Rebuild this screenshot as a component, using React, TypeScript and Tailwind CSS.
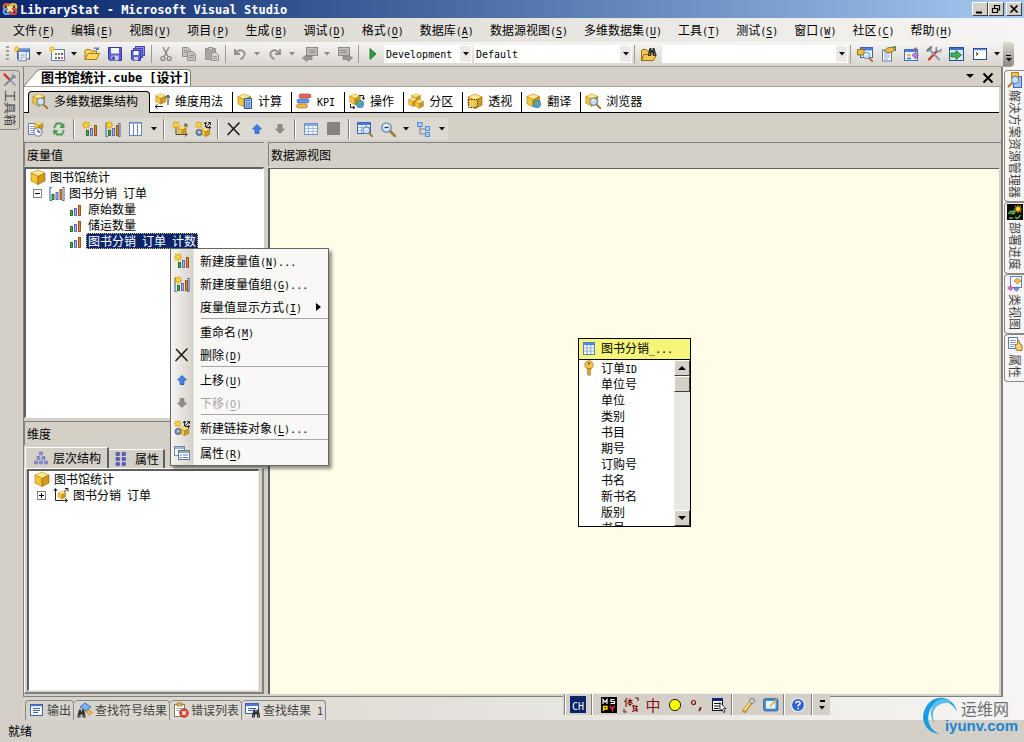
import React from 'react';

/* ---------- text ---------- */

const MONO = "font-['DejaVu_Sans_Mono','Liberation_Mono',monospace]";

function T({ children, big = false }: { children: string; big?: boolean }) {
  const parts = children.split(/([\x00-\x7f]+)/).filter(Boolean);
  return (
    <span className="whitespace-pre">
      {parts.map((p, i) =>
        p.charCodeAt(0) < 128 ? (
          <span key={i} className={`leading-none ${MONO} ${big ? 'text-[12px]' : 'text-[10px]'}`}>{p}</span>
        ) : (
          <React.Fragment key={i}>{p}</React.Fragment>
        ),
      )}
    </span>
  );
}

function KeyLabel({ text, k, dots = false }: { text: string; k: string; dots?: boolean }) {
  return (
    <span className="whitespace-pre">
      {text}
      <span className={`${MONO} text-[10px] leading-none`}>
        (<span className="underline underline-offset-2">{k}</span>){dots ? '...' : ''}
      </span>
    </span>
  );
}

/* ---------- drawing pieces ---------- */

function Cube({ t }: { t?: string }) {
  return (
    <g transform={t}>
      <path d="M8 1 L15 4 L8 7.5 L1 4Z" fill="#ffe98c" stroke="#b8860b" strokeWidth=".6" />
      <path d="M1 4 L8 7.5 V15.5 L1 12Z" fill="#f6c63a" stroke="#a87408" strokeWidth=".6" />
      <path d="M15 4 L8 7.5 V15.5 L15 12Z" fill="#d29a1c" stroke="#8a5f08" strokeWidth=".6" />
    </g>
  );
}

function Star({ t }: { t?: string }) {
  return (
    <g transform={t}>
      <path d="M4 0V8M0 4H8M1 1L7 7M7 1L1 7" stroke="#e6a200" strokeWidth="1.1" />
      <circle cx="4" cy="4" r="2" fill="#ffe24a" stroke="#e6a200" strokeWidth=".5" />
    </g>
  );
}

function Lens({ t }: { t?: string }) {
  return (
    <g transform={t}>
      <path d="M9 9L14 14" stroke="#a8742c" strokeWidth="2.4" strokeLinecap="round" />
      <circle cx="6" cy="6" r="4.3" fill="#cfe6ff" fillOpacity=".9" stroke="#6a86ac" strokeWidth="1.3" />
      <path d="M3.8 5.4Q4.6 3.6 6.6 3.6" stroke="#fff" strokeWidth="1" fill="none" />
    </g>
  );
}

function Bars({ t }: { t?: string }) {
  return (
    <g transform={t}>
      <rect x="2.5" y="9.5" width="2" height="5" fill="#43b349" stroke="#1d6a24" strokeWidth=".9" />
      <rect x="6.5" y="7.5" width="2" height="7" fill="#b0b4f2" stroke="#5a5cb0" strokeWidth=".9" />
      <rect x="10.5" y="4.5" width="2" height="10" fill="#e08a30" stroke="#8f4a10" strokeWidth=".9" />
    </g>
  );
}

function Win({ t }: { t?: string }) {
  return (
    <g transform={t}>
      <rect x=".5" y=".5" width="12" height="10" fill="#f6f9ff" stroke="#3d62a8" />
      <rect x="1" y="1" width="11" height="2.5" fill="#4f7fd8" />
    </g>
  );
}

function Sheet({ t, lines = '#7f9ccc' }: { t?: string; lines?: string }) {
  return (
    <g transform={t}>
      <rect x=".5" y=".5" width="9" height="11" fill="#fff" stroke="#5f7cae" />
      <path d="M2 3.5H8M2 5.5H8M2 7.5H8M2 9.5H6" stroke={lines} strokeWidth=".9" />
    </g>
  );
}

function Globe({ t }: { t?: string }) {
  return (
    <g transform={t}>
      <circle cx="4" cy="4" r="3.8" fill="#4b9bd8" stroke="#2a6397" strokeWidth=".5" />
      <path d="M1.5 2.5Q4 0 5 2T3.5 4.5 1.5 2.5M4.5 5Q7 4 6.5 6T4.5 5" fill="#5cb85c" />
    </g>
  );
}

function Brackets() {
  return <path d="M3 2.5H1V15.5H3M13 2.5H15V15.5H13" fill="none" stroke="#4c76b8" strokeWidth="1.2" />;
}

function Arrow({ c, s, flip = false }: { c: string; s: string; flip?: boolean }) {
  return (
    <path
      transform={flip ? 'rotate(180 8 8)' : undefined}
      d="M8 3.5L12.5 8H10V12.5H6V8H3.5Z"
      fill={c}
      stroke={s}
      strokeWidth=".7"
    />
  );
}

function Binoc({ t }: { t?: string }) {
  return (
    <g transform={t} fill="#333">
      <path d="M2 1H4V3H5V1H7L8.5 7V9H5.5V6H3.5V9H.5V7Z" />
      <path d="M2 6.5V8M7 6.5V8" stroke="#aaa" strokeWidth=".8" />
    </g>
  );
}

const ICONS: Record<string, React.ReactNode> = {
  logo: (
    <g fill="none" strokeWidth="2.2">
      <ellipse cx="4.9" cy="5.8" rx="3.2" ry="2.6" stroke="#e8602c" />
      <ellipse cx="11.1" cy="5.8" rx="3.2" ry="2.6" stroke="#f4c430" />
      <ellipse cx="4.9" cy="10.4" rx="3.2" ry="2.6" stroke="#5aa0e8" />
      <ellipse cx="11.1" cy="10.4" rx="3.2" ry="2.6" stroke="#e04838" />
      <path d="M5 5L11 11M11 5L5 11" stroke="#f8e8a0" strokeWidth="1.8" />
    </g>
  ),
  newProject: (
    <>
      <Win t="translate(3 2.5)" />
      <Sheet t="translate(4 5) scale(.85)" />
      <Star t="translate(-.5 0) scale(.8)" />
    </>
  ),
  newItem: (
    <>
      <rect x="2.5" y="3.5" width="13" height="11" fill="#fff" stroke="#6b7fae" />
      <path d="M6 8H8M6 12H8" stroke="#4a9a4a" strokeWidth="2" />
      <path d="M9 8H11M12 12H14" stroke="#cc5533" strokeWidth="2" />
      <path d="M12 8H14M9 12H11" stroke="#3b5fc0" strokeWidth="2" />
      <Star t="translate(-.5 0) scale(.8)" />
    </>
  ),
  open: (
    <>
      <path d="M1 13.5V4.5L2 3.5H6L7.5 5H12.5V7.5" fill="#f4d36a" stroke="#a57a14" />
      <path d="M1 13.5L4.2 7.5H15.5L12.5 13.5Z" fill="#ffd860" stroke="#a57a14" />
      <path d="M9.5 2.5Q12 .8 14 3M14.2 1V3.6H11.8" fill="none" stroke="#3c62a8" />
    </>
  ),
  save: (
    <>
      <path d="M1.5 1.5H14.5V14.5H3L1.5 13Z" fill="#5b60d4" stroke="#3438a0" />
      <rect x="4" y="2" width="8" height="5.5" fill="#f3f5ff" />
      <rect x="4.5" y="9.5" width="7" height="5" fill="#c9cdec" />
      <rect x="5.5" y="10.5" width="2" height="3.5" fill="#26297c" />
    </>
  ),
  saveAll: (
    <>
      <rect x="5.5" y=".5" width="9" height="9" fill="#8a8fe8" stroke="#4448b0" />
      <rect x="3.5" y="2.5" width="9" height="9" fill="#7276dc" stroke="#4448b0" />
      <path d="M1.5 4.5H10.5V14.5H3L1.5 13Z" fill="#5b60d4" stroke="#3438a0" />
      <rect x="3.5" y="5" width="5" height="4" fill="#f3f5ff" />
      <rect x="4" y="11" width="4" height="3.5" fill="#c9cdec" />
    </>
  ),
  cut: (
    <g fill="none" stroke="#8c8984">
      <path d="M5 1L9.8 10.5M11 1L6.2 10.5" strokeWidth="1.5" />
      <circle cx="4.8" cy="12.6" r="2" strokeWidth="1.4" />
      <circle cx="11.2" cy="12.6" r="2" strokeWidth="1.4" />
    </g>
  ),
  copy: (
    <g fill="#c4c1bb" stroke="#96938e">
      <path d="M1.5 1.5H7L9.5 4V10.5H1.5Z" />
      <path d="M6.5 5.5H12L14.5 8V14.5H6.5Z" />
      <path d="M3 4.5H6M3 6.5H6M8 9.5H13M8 11.5H13" />
    </g>
  ),
  paste: (
    <g stroke="#96938e">
      <path d="M1.5 2.5H11.5V13.5H1.5Z" fill="#a9a6a1" />
      <path d="M4.5 1.5H8.5V4H4.5Z" fill="#d4d1cb" />
      <path d="M7.5 6.5H12L14.5 9V14.5H7.5Z" fill="#d8d5d0" />
      <path d="M9 10.5H13M9 12.5H13" />
    </g>
  ),
  undo: <path d="M3 3V8H8M3.5 7.5Q8 2 11.5 5.5T8.5 13.5" fill="none" stroke="#96938e" strokeWidth="2" />,
  redo: <path d="M13 3V8H8M12.5 7.5Q8 2 4.5 5.5T7.5 13.5" fill="none" stroke="#96938e" strokeWidth="2" />,
  navBack: (
    <g stroke="#8d8a86">
      <rect x="4.5" y="1.5" width="11" height="8" fill="#bfbcb6" />
      <path d="M7 4.5H13M7 6.5H13" />
      <path d="M.5 12L5 8.5V10.5H10V13.5H5V15.5Z" fill="#9d9a95" />
    </g>
  ),
  navFwd: (
    <g stroke="#8d8a86">
      <rect x="1.5" y="1.5" width="11" height="8" fill="#bfbcb6" />
      <path d="M3 4.5H10M3 6.5H10" />
      <path d="M15.5 12L11 8.5V10.5H6V13.5H11V15.5Z" fill="#9d9a95" />
    </g>
  ),
  play: <path d="M5 2.5L11 8L5 13.5Z" fill="#2f9e3c" stroke="#1a6a26" strokeWidth=".8" />,
  findFolder: (
    <>
      <path d="M.5 14.5V4.5L1.5 3.5H5L6.5 5H11.5V14.5Z" fill="#f0c95a" stroke="#96700f" />
      <path d="M.5 14.5L3 8.5H15.5L12.5 14.5Z" fill="#f8c850" stroke="#96700f" />
      <Binoc t="translate(6.5 1)" />
    </>
  ),
  solution: (
    <>
      <Win t="translate(3 1)" />
      <path d="M.5 3.5H7V9H.5Z" fill="#f0c040" stroke="#9a7010" />
      <Lens t="translate(5 5) scale(.75)" />
    </>
  ),
  props: (
    <>
      <Sheet t="translate(2 3.5)" />
      <path d="M4 5L8 1.5H13L15 4L11 6.5H7Z" fill="#e8b84c" stroke="#8a6418" strokeWidth=".8" />
      <path d="M12.5 1H15.5V5" fill="none" stroke="#4a8a3c" strokeWidth="1.5" />
    </>
  ),
  objBrowser: (
    <>
      <rect x="1.5" y="3.5" width="13" height="11" fill="#eaf1ff" stroke="#4870b8" />
      <path d="M2 5H14" stroke="#4f7fd8" strokeWidth="2" />
      <path d="M3.5 9L6 7.5L8 9L6 11Z" fill="#e8b838" />
      <path d="M9 9L12.5 6.5L15.5 9L12.5 13Z" fill="#c07cd8" stroke="#7a3c94" strokeWidth=".6" />
      <path d="M4 12.5H8" stroke="#4a74c8" strokeWidth="1.5" />
      <path d="M10 3.5L12.5 1L14.5 3Z" fill="#e05848" />
    </>
  ),
  tools: (
    <g fill="none" strokeLinecap="round">
      <path d="M11 5L3 13.5" stroke="#c83c28" strokeWidth="2.4" />
      <path d="M4 4L13 13.5" stroke="#8c98a8" strokeWidth="2" />
      <path d="M1.5 4.5L5 1.5" stroke="#70808f" strokeWidth="2.6" />
      <path d="M10.5 1.5Q9.5 5 12 5.5T15 3.5" stroke="#7d8b9c" strokeWidth="1.6" />
    </g>
  ),
  startPage: (
    <>
      <rect x=".5" y="1.5" width="14" height="13" fill="#d8e8fc" stroke="#274d92" />
      <path d="M1 3H14" stroke="#3f6fc8" strokeWidth="2" />
      <path d="M2 7H7V4.5L12.5 9L7 13.5V11H2Z" fill="#3cb44a" stroke="#17702a" strokeWidth=".8" />
    </>
  ),
  command: (
    <>
      <rect x="1.5" y="2.5" width="13" height="11" fill="#fff" stroke="#274d92" />
      <path d="M2 3.5H14" stroke="#5a8ae0" strokeWidth="1.4" />
      <path d="M4 6.5L6 8L4 9.5" fill="none" stroke="#111" />
    </>
  ),
  cube: <Cube />,
  cubeLens: (
    <>
      <Cube t="scale(.85)" />
      <Lens t="translate(3.5 3.5) scale(.85)" />
    </>
  ),
  dimUse: (
    <>
      <Cube t="translate(1 0) scale(.72)" />
      <path d="M1 13.5H9M1 13.5L3.5 11.5M1 13.5L3.5 15.5M14 12V3M14 2L12 5M14 2L16 5" stroke="#222" fill="none" />
    </>
  ),
  calc: (
    <>
      <Cube t="scale(.9)" />
      <rect x="7.5" y="5.5" width="7" height="10" fill="#9fc0ee" stroke="#35599c" />
      <path d="M9 7.5H13M9 10H13M9 12H13M9 14H13" stroke="#35599c" strokeDasharray="1 .6" />
    </>
  ),
  kpi: (
    <>
      <rect x="3" y="1" width="12" height="4" rx="2" fill="#e2665a" stroke="#98332a" strokeWidth=".6" />
      <rect x="1" y="6" width="12" height="4" rx="2" fill="#6f93dc" stroke="#30559c" strokeWidth=".6" />
      <rect x=".5" y="11" width="11" height="4" rx="2" fill="#f0b848" stroke="#9c6c10" strokeWidth=".6" />
    </>
  ),
  action: (
    <>
      <Cube t="translate(0 0) scale(.75)" />
      <Globe t="translate(7 7)" />
      <path d="M10 2.5H14.5V6M12.8 4.5L14.5 6.5L16 4.5M1.5 11V14.5H5M4 13L6 14.5L4 16" fill="none" stroke="#222" />
    </>
  ),
  partition: (
    <>
      <Cube t="translate(3 0) scale(.62)" />
      <Cube t="translate(0 4) scale(.62)" />
      <Cube t="translate(6.5 6) scale(.6)" />
    </>
  ),
  perspective: (
    <>
      <Cube />
      <rect x="1.5" y="6.5" width="9" height="8" fill="#f0cc60" fillOpacity=".8" stroke="#4a3608" strokeDasharray="1.5 1" />
    </>
  ),
  translate: (
    <>
      <Cube t="scale(.9)" />
      <Globe t="translate(7 7)" />
    </>
  ),
  process: (
    <>
      <Sheet t="translate(0 2)" />
      <Cube t="translate(6 0) scale(.6)" />
      <circle cx="10" cy="11" r="4.2" fill="#f4f4f8" stroke="#7078a8" />
      <path d="M10 8.5V11H12.5" fill="none" stroke="#333" />
    </>
  ),
  refresh: (
    <g fill="none" stroke="#4c9a58" strokeWidth="1.8">
      <path d="M3 7L5.5 2.5H10L12 6M12.5 2.5V6.2H9" />
      <path d="M13 9L11 13.5H6L4 10M3.2 13.5V10H6.5" />
    </g>
  ),
  newMeasure: (
    <>
      <Bars t="translate(2 0)" />
      <Star t="scale(1.02)" />
    </>
  ),
  newGroup: (
    <>
      <Bars t="translate(1 0)" />
      <Brackets />
      <Star t="scale(1.02)" />
    </>
  ),
  group: (
    <>
      <Bars t="translate(.5 0)" />
      <Brackets />
    </>
  ),
  bars: <Bars />,
  columns: (
    <>
      <rect x="1.5" y="1.5" width="12" height="13" fill="#fff" stroke="#6f86b8" />
      <path d="M5.5 2V14M9.5 2V14" stroke="#6f86b8" />
      <path d="M2 2.5H13" stroke="#9fb6e4" />
    </>
  ),
  newDim: (
    <>
      <path d="M4 5V13.5H15M13 11.5L15 13.5L13 15.5M8 10L14.5 3.5M12 3.2H14.8V6" fill="none" stroke="#4d4320" />
      <Cube t="translate(5.5 4.5) scale(.58)" />
      <Star />
    </>
  ),
  dim: (
    <>
      <path d="M2.5 2V13.5H14M.8 4L2.5 1.5L4.2 4M12 11.5L14.5 13.5L12 15.5M11 5L14.5 2M12 1.5H15V4.5" fill="none" stroke="#222" />
      <Cube t="translate(4.5 3.5) scale(.55)" />
    </>
  ),
  linked: (
    <>
      <Cube t="translate(5.5 6) scale(.62)" />
      <path d="M10.5 6V1.5M9 3L10.5 1L12 3M11 6.5H15.5M14 5L15.8 6.5L14 8M11 6L15 2M13 1.5H15.5V4" fill="none" stroke="#111" strokeWidth=".9" />
      <circle cx="4" cy="11.5" r="3" fill="#8296bc" stroke="#3a4a70" strokeWidth=".8" />
      <path d="M4 9.8V11.5H5.5" fill="none" stroke="#fff" strokeWidth=".8" />
      <Star t="scale(.95)" />
    </>
  ),
  del: <path d="M2.5 2.5L13 13.5M13 2L2 13.5" stroke="#222" strokeWidth="1.7" strokeLinecap="round" />,
  up: <Arrow c="#3d82ee" s="#1c50b0" />,
  down: <Arrow c="#8f8c88" s="#7a7773" flip />,
  grid: (
    <>
      <rect x="1.5" y="2.5" width="13" height="11" fill="#f2f6ff" stroke="#6f8fc8" />
      <path d="M2 4H14" stroke="#86a8e4" strokeWidth="2" />
      <path d="M2 7.5H14M2 10.5H14M5.5 5V13M10 5V13" stroke="#a2b8e0" strokeWidth=".9" />
    </>
  ),
  square: <rect x="1" y="1" width="13" height="13" fill="#868480" />,
  gridLens: (
    <>
      <rect x=".5" y="1.5" width="13" height="11" fill="#f2f6ff" stroke="#3f62b4" />
      <path d="M1 3H13" stroke="#4f78d0" strokeWidth="2" />
      <path d="M1 6.5H13M1 9.5H13M4.5 4V12M9 4V12" stroke="#8ca4d8" strokeWidth=".8" />
      <Lens t="translate(4.5 4.5) scale(.8)" />
    </>
  ),
  zoomOut: (
    <>
      <Lens t="scale(1.08)" />
      <path d="M4.5 6.5H8.5" stroke="#333" strokeWidth="1.2" />
    </>
  ),
  layout: (
    <>
      <path d="M4 5V13H9M4 8H9" fill="none" stroke="#7a8494" />
      <g fill="#a9d0fb" stroke="#4a8ad2" strokeWidth=".9">
        <rect x="1.5" y="1.5" width="4.5" height="4" />
        <rect x="9.5" y="5.5" width="4" height="4" />
        <rect x="9.5" y="11.5" width="4" height="4" />
      </g>
    </>
  ),
  hierarchy: (
    <g fill="#8b93d8" stroke="#5a62ac" strokeWidth=".5">
      <path d="M6.5 2h3v3h-3zM4 6.5h3v3h-3zM9 6.5h3v3h-3zM1.5 11h3v3h-3zM6.5 11h3v3h-3zM11.5 11h3v3h-3z" />
    </g>
  ),
  attrs: (
    <g fill="#5d5ccc" stroke="#37369c" strokeWidth=".5">
      <path d="M3 1.5h3.5v3h-3.5zM9 1.5h3.5v3h-3.5zM3 6.5h3.5v3h-3.5zM9 6.5h3.5v3h-3.5zM3 11.5h3.5v3h-3.5zM9 11.5h3.5v3h-3.5z" />
    </g>
  ),
  propWin: (
    <>
      <rect x=".5" y="1.5" width="10" height="9" fill="#f6f4ea" stroke="#7487ad" />
      <path d="M1 3H10" stroke="#9fb6dc" strokeWidth="2" />
      <rect x="4.5" y="5.5" width="11" height="9" fill="#fff" stroke="#5c76a8" />
      <path d="M5 7H15" stroke="#86b09a" strokeWidth="2" />
      <path d="M6 10H8M9 10H14M6 12.5H8M9 12.5H14" stroke="#5c76a8" />
    </>
  ),
  table: (
    <>
      <rect x="2.5" y="2.5" width="11" height="12" fill="#fff" stroke="#5a83c4" />
      <path d="M3 4H13" stroke="#4c8ae8" strokeWidth="2.4" />
      <path d="M3 8H13M3 11H13M6 5V14M9.8 5V14" stroke="#86a8d8" />
    </>
  ),
  key: (
    <>
      <circle cx="8" cy="5" r="4.2" fill="#f3c14c" stroke="#b8852a" strokeWidth=".8" />
      <circle cx="8" cy="3.4" r="1.1" fill="#7a5208" />
      <path d="M6.6 8.5V14.5L8.2 15.7L9.6 14.5V13L8.8 12L9.6 11V8.5Z" fill="#e0a834" stroke="#a06e12" strokeWidth=".7" />
    </>
  ),
  toolbox: (
    <g fill="none" strokeLinecap="round">
      <path d="M2.5 2.5L8 8" stroke="#d03020" strokeWidth="2.4" />
      <path d="M8 8L13 13" stroke="#70889c" strokeWidth="1.4" />
      <path d="M12.5 4L3 13" stroke="#7d8a98" strokeWidth="2" />
      <path d="M10.5 2.5Q10 5 13.5 5.5" stroke="#7d8a98" strokeWidth="1.4" />
    </g>
  ),
  solSide: (
    <>
      <rect x="6.5" y="4.5" width="8" height="11" fill="#9ec2f4" stroke="#3f68b0" />
      <path d="M4.5 .5H11.5V6.5H4.5Z" fill="#f0c44a" stroke="#98700f" strokeWidth=".8" />
      <Lens t="translate(13 3) scale(-.82 .82)" />
    </>
  ),
  deploy: (
    <>
      <rect width="16" height="16" fill="#0a0a0a" />
      <Star t="translate(7 1)" />
      <path d="M1.5 10Q4 5 7 9M7 6V9.5H3.5M8 13Q11 16 13.5 11M2 14H6" fill="none" stroke="#5cb85c" strokeWidth="1.5" />
    </>
  ),
  classView: (
    <>
      <rect x="3.5" y=".5" width="11" height="11" fill="#f4f8ff" stroke="#5f80bc" />
      <path d="M7 5L10.5 2L14 5L10.5 8Z" fill="#f2c444" stroke="#9a7010" strokeWidth=".6" />
      <path d="M.5 12L3.5 9.5L6.5 12L3.5 14.5Z" fill="#d472c8" stroke="#8a3a80" strokeWidth=".6" />
      <path d="M7 13L9.5 11L12 13L9.5 15.2Z" fill="#6c9ae8" stroke="#35599c" strokeWidth=".6" />
    </>
  ),
  propSide: (
    <>
      <Sheet t="translate(1 1)" />
      <path d="M9.5 14.5L8 9L10.5 8V4.5L12 4.5L13 8L15 9V14.5Z" fill="#f2cf74" stroke="#8a6418" strokeWidth=".8" />
    </>
  ),
  output: (
    <>
      <rect x="1.5" y="2.5" width="12" height="11" fill="#fff" stroke="#3a62b0" />
      <path d="M2 3.5H13" stroke="#4a7ad8" strokeWidth="1.6" />
      <path d="M4 6.5H11M4 8.5H11M4 10.5H9" stroke="#3a62b0" />
    </>
  ),
  findSymbol: (
    <>
      <path d="M3 5L8 1L14 5L9 9Z" fill="#7db0f0" stroke="#2d5ca8" strokeWidth=".8" />
      <path d="M9 10L12 8L15.5 10.5L12.5 13Z" fill="#f2c444" stroke="#9a7010" strokeWidth=".6" />
      <Binoc t="translate(0 6.5)" />
    </>
  ),
  errors: (
    <>
      <rect x="1.5" y="2.5" width="10" height="12" fill="#fff" stroke="#8a7a50" />
      <rect x="4" y="1" width="5" height="3" fill="#e0b848" stroke="#8a6a18" strokeWidth=".6" />
      <path d="M3.5 6.5H9M3.5 8.5H7" stroke="#9aa8c4" />
      <circle cx="11" cy="11" r="4.4" fill="#dc4a34" stroke="#9a2414" strokeWidth=".6" />
      <path d="M9.3 9.3L12.7 12.7M12.7 9.3L9.3 12.7" stroke="#fff" strokeWidth="1.3" />
    </>
  ),
  findResults: (
    <>
      <rect x=".5" y="1.5" width="13" height="10" fill="#fff" stroke="#3a62b0" />
      <path d="M1 3H13" stroke="#4a7ad8" strokeWidth="2" />
      <path d="M3 6.5H11M3 8.5H8" stroke="#3a62b0" />
      <Binoc t="translate(6.5 6.5)" />
    </>
  ),
  mspy: (
    <>
      <rect width="16" height="16" fill="#000" />
      <path d="M2 7V2.5L4 5L6 2.5V7M13.5 2.5H10V4.5H13.5V6.5H9.5" fill="none" stroke="#fff" strokeWidth="1.2" />
      <path d="M2.5 14V9.5H6V12H2.5" fill="none" stroke="#ffe000" strokeWidth="1.3" />
      <path d="M9 9L11.3 12L13.8 9M11.3 12V14.5" fill="none" stroke="#ff3020" strokeWidth="1.4" />
    </>
  ),
  exp: (
    <g stroke="#7d1010" fill="none" strokeWidth="1.1">
      <path d="M12 1H15V4M1 12V15H4" />
      <path d="M4 1L1.5 5M3 4V10M4.5 3.5H9.5M7 1.5V9M7 3.5L4.5 7M7 3.5L9.5 7M5.5 7.5H8.5M9 9L15 9.5M10.5 8V13M9 14.5L15 12.5M13 8.5L14 15M10 11.5L14 12" />
    </g>
  ),
  moon: <circle cx="8" cy="8" r="5.6" fill="#ffff00" stroke="#222" />,
  punct: (
    <g fill="none" stroke="#7d1010" strokeWidth="1.2">
      <circle cx="4.5" cy="5.5" r="2" />
      <path d="M11.5 10V11.5L10 14" strokeWidth="1.7" />
    </g>
  ),
  imeMenu: (
    <>
      <rect x="1.5" y="1.5" width="10" height="12" fill="#fff" stroke="#111" />
      <path d="M1 2.5H12" stroke="#16217c" strokeWidth="3" />
      <path d="M3 6.5H10M3 9H10M3 11.5H8" stroke="#111" />
      <path d="M9 5.5V14L11 12.2L12.5 15.5L14 14.8L12.6 11.6H15Z" fill="#fff" stroke="#111" strokeWidth=".8" />
    </>
  ),
  pen: (
    <>
      <path d="M3.5 14L10 5" stroke="#b88c30" strokeWidth="4" strokeLinecap="round" />
      <path d="M3.5 13.5L9.5 5" stroke="#fbe48c" strokeWidth="2" />
      <circle cx="11" cy="3.8" r="2.6" fill="#c9ccd4" stroke="#70747c" strokeWidth=".8" />
    </>
  ),
  pad: (
    <>
      <rect x=".8" y="1.8" width="14" height="12" rx="1.5" fill="#4a94dc" stroke="#1d5a9c" />
      <rect x="3" y="4" width="9.5" height="7.5" fill="#eef8ff" />
      <path d="M7 9.5L13.5 2.5" stroke="#d8b048" strokeWidth="1.8" />
    </>
  ),
  help: (
    <>
      <circle cx="8" cy="8" r="6.6" fill="#2f62cc" stroke="#dfe8fa" strokeWidth="1.4" />
      <path d="M5.8 6.4Q6 4.4 8 4.4T10.2 6.3Q10.2 7.4 8.1 8.4V9.6M8.1 10.8V12.2" fill="none" stroke="#fff" strokeWidth="1.5" />
    </>
  ),
};

function Icon({ name }: { name: string }) {
  return (
    <svg viewBox="0 0 16 16" className="size-4 shrink-0" aria-hidden="true">
      {ICONS[name]}
    </svg>
  );
}

function Caret({ gray = false }: { gray?: boolean }) {
  return (
    <svg viewBox="0 0 6 4" className="h-1 w-1.5 shrink-0" aria-hidden="true">
      <path d="M0 0H6L3 3.4Z" fill={gray ? '#8d8a86' : '#111'} />
    </svg>
  );
}

/* ---------- toolbars ---------- */

function ToolItem({ name }: { name: string }) {
  if (name === '|') return <span className="mx-[2px] h-[18px] w-px shrink-0 bg-[#9d9a94]" />;
  if (name === '||') return <span className="mx-[3px] h-5 w-[2px] shrink-0 border-l border-[#808080] bg-white" />;
  if (name === 'v' || name === 'vv' || name === 'vg')
    return (
      <button type="button" aria-label="更多" className={`flex h-5 shrink-0 items-center justify-center ${name === 'vv' ? 'w-[13px]' : 'w-3'}`}>
        <Caret gray={name === 'vg'} />
      </button>
    );
  return (
    <button type="button" aria-label={name} className="flex h-[22px] w-[23px] shrink-0 items-center justify-center">
      <Icon name={name} />
    </button>
  );
}

function Combo({ label, value, className }: { label: string; value: string; className: string }) {
  return (
    <div className={`relative h-[18px] bg-white ${className}`}>
      <select aria-label={label} className={`h-full w-full appearance-none pl-0.5 text-[10px] leading-4 ${MONO}`}>
        <option>{value}</option>
      </select>
      <span className="pointer-events-none absolute inset-y-px right-px flex w-[11px] items-center justify-center bg-[#ebe9e5]">
        <Caret />
      </span>
    </div>
  );
}

const MAIN_LEFT = ['newProject', 'v', 'newItem', 'v', 'open', 'save', 'saveAll', '|', 'cut', 'copy', 'paste', '|', 'undo', 'vg', 'redo', 'vg', 'navBack', 'vg', 'navFwd', '|', 'play'];
const MAIN_RIGHT = ['|', 'solution', 'props', 'objBrowser', 'tools', 'startPage', 'command', 'v'];
const CUBE_BAR = ['process', 'refresh', '||', 'newMeasure', 'newGroup', 'columns', 'vv', '||', 'newDim', 'linked', '||', 'del', 'up', 'down', '||', 'grid', 'square', '||', 'gridLens', 'zoomOut', 'vv', 'layout', 'vv'];

const MENUS: [string, string][] = [
  ['文件', 'F'], ['编辑', 'E'], ['视图', 'V'], ['项目', 'P'], ['生成', 'B'], ['调试', 'D'], ['格式', 'O'], ['数据库', 'A'],
  ['数据源视图', 'S'], ['多维数据集', 'U'], ['工具', 'T'], ['测试', 'S'], ['窗口', 'W'], ['社区', 'C'], ['帮助', 'H'],
];

const TABS: [string, string][] = [
  ['dimUse', '维度用法'], ['calc', '计算'], ['kpi', 'KPI'], ['action', '操作'], ['partition', '分区'],
  ['perspective', '透视'], ['translate', '翻译'], ['cubeLens', '浏览器'],
];

const FIELDS = ['订单ID', '单位号', '单位', '类别', '书目', '期号', '订购号', '书名', '新书名', '版别', '书号'];

type MenuRow = { icon?: string; text: string; k: string; dots?: boolean; sub?: boolean; off?: boolean } | null;
const CONTEXT: MenuRow[] = [
  { icon: 'newMeasure', text: '新建度量值', k: 'N', dots: true },
  { icon: 'newGroup', text: '新建度量值组', k: 'G', dots: true },
  { text: '度量值显示方式', k: 'I', sub: true },
  null,
  { text: '重命名', k: 'M' },
  { icon: 'del', text: '删除', k: 'D' },
  null,
  { icon: 'up', text: '上移', k: 'U' },
  { icon: 'down', text: '下移', k: 'O', off: true },
  null,
  { icon: 'linked', text: '新建链接对象', k: 'L', dots: true },
  null,
  { icon: 'propWin', text: '属性', k: 'R' },
];

const RAISED = 'border border-t-white border-l-white border-r-[#404040] border-b-[#404040] bg-[#d4d0c8]';

function TitleBar() {
  const btn = `flex h-[14px] w-4 items-center justify-center ${RAISED}`;
  return (
    <header className="flex h-[18px] shrink-0 items-center bg-linear-to-r from-[#0a246a] to-[#a6caf0] pr-0.5 pl-0.5 text-white">
      <Icon name="logo" />
      <h1 className="ml-0.5 flex-1 font-bold"><T big>LibraryStat - Microsoft Visual Studio</T></h1>
      <button type="button" aria-label="最小化" className={btn}>
        <svg viewBox="0 0 10 10" className="size-2.5"><path d="M1 8.5H7" stroke="#000" strokeWidth="2" /></svg>
      </button>
      <button type="button" aria-label="还原" className={btn}>
        <svg viewBox="0 0 10 10" className="size-2.5"><path d="M3.5 4V1.5H8.5V6H7M1.5 4.5H6.5V8.5H1.5ZM3 1.5H9M1 4.5H7" fill="none" stroke="#000" strokeWidth="1.2" /></svg>
      </button>
      <button type="button" aria-label="关闭" className={`ml-0.5 ${btn}`}>
        <svg viewBox="0 0 10 10" className="size-2.5"><path d="M1.5 1.5L8.5 8.5M8.5 1.5L1.5 8.5" stroke="#000" strokeWidth="1.7" /></svg>
      </button>
    </header>
  );
}

function SideTab({ icon, label, left = false }: { icon: string; label: string; left?: boolean }) {
  return (
    <button
      type="button"
      className={`flex w-5 flex-col items-center gap-0.5 border border-[#8c8984] pt-px pb-[3px] text-[#444] ${
        left ? 'rounded-r border-l-0' : 'rounded-l border-r-0'
      }`}
    >
      <Icon name={icon} />
      <span className="leading-4 [text-orientation:sideways] [writing-mode:vertical-rl]">{label}</span>
    </button>
  );
}

function Expander({ plus = false }: { plus?: boolean }) {
  return (
    <button type="button" aria-label={plus ? '展开' : '折叠'} className="flex size-[9px] shrink-0 items-center justify-center border border-[#808080] bg-white">
      <svg viewBox="0 0 7 7" className="size-[7px]">
        <path d={plus ? 'M1 3.5H6M3.5 1V6' : 'M1 3.5H6'} stroke="#000" />
      </svg>
    </button>
  );
}

function PaneHeader({ children }: { children: string }) {
  return (
    <h2 className="flex h-6 shrink-0 items-center border-t border-l border-[#808080] pl-0.5"><T>{children}</T></h2>
  );
}

function MeasuresPane() {
  return (
    <section className="flex flex-col">
      <PaneHeader>度量值</PaneHeader>
      <ul className="mt-px h-[251px] border border-t-2 border-l-2 border-[#606060] border-r-white border-b-white bg-white">
        <li className="flex h-4 items-center gap-1 pl-1"><Icon name="cube" /><T>图书馆统计</T></li>
        <li className="flex h-4 items-center pl-[7px]">
          <Expander />
          <span className="ml-[7px] flex items-center gap-1"><Icon name="group" /><T>图书分销 订单</T></span>
        </li>
        <li className="flex h-4 items-center gap-1 pl-[42px]"><Icon name="bars" /><T>原始数量</T></li>
        <li className="flex h-4 items-center gap-1 pl-[42px]"><Icon name="bars" /><T>储运数量</T></li>
        <li className="flex h-4 items-center gap-[2px] pl-[42px]">
          <Icon name="bars" />
          <span className="h-4 border border-dotted border-[#d8c080] bg-[#0a246a] px-px leading-[14px] text-white"><T>图书分销 订单 计数</T></span>
        </li>
      </ul>
    </section>
  );
}

function DimensionsPane() {
  return (
    <section className="mt-[3px] flex flex-1 flex-col">
      <PaneHeader>维度</PaneHeader>
      <div className="mt-[2px] flex h-[21px] shrink-0 items-end pl-px">
        <button type="button" className="flex h-[21px] items-center gap-1 border-t border-r-2 border-l border-t-white border-r-[#606060] border-l-white pr-1.5 pl-[7px]">
          <Icon name="hierarchy" /><T>层次结构</T>
        </button>
        <button type="button" className="flex h-[19px] items-center gap-1.5 border-t border-r-2 border-t-white border-r-[#606060] pr-1 pl-1">
          <Icon name="attrs" /><T>属性</T>
        </button>
      </div>
      <div className="flex flex-1 border border-t-white border-r-2 border-b-2 border-l-white border-[#808080] pr-[3px] pb-px pl-[2px]">
        <ul className="flex-1 border border-t-2 border-l-2 border-[#606060] border-r-[#e8e6e2] border-b-[#e8e6e2] bg-white">
          <li className="flex h-4 items-center gap-1 pl-[5px]"><Icon name="cube" /><T>图书馆统计</T></li>
          <li className="flex h-4 items-center pl-2">
            <Expander plus />
            <span className="ml-[7px] flex items-center gap-1"><Icon name="dim" /><T>图书分销 订单</T></span>
          </li>
        </ul>
      </div>
    </section>
  );
}

function TableNode() {
  const sb = 'flex size-4 shrink-0 items-center justify-center';
  return (
    <div className="absolute top-[169px] left-[308px] flex h-[189px] w-[113px] flex-col border border-black bg-white">
      <h3 className="flex h-[21px] shrink-0 items-center gap-1 border-b border-black bg-[#f5f57a] pb-0.5 pl-0.5">
        <Icon name="table" /><T>图书分销_...</T>
      </h3>
      <div className="flex min-h-0 flex-1">
        <ul className="flex-1 overflow-hidden">
          {FIELDS.map((f, i) => (
            <li key={f} className="flex h-4 items-center gap-1 pl-0.5">
              {i === 0 ? <Icon name="key" /> : <span className="w-4" />}
              <T>{f}</T>
            </li>
          ))}
        </ul>
        <div className="flex w-4 flex-col bg-[#e9e7e3]">
          <button type="button" aria-label="向上滚动" className={`${sb} ${RAISED}`}>
            <svg viewBox="0 0 8 4" className="h-1 w-2"><path d="M0 4L4 0L8 4Z" /></svg>
          </button>
          <span className={`h-4 ${RAISED}`} />
          <span className="flex-1" />
          <button type="button" aria-label="向下滚动" className={`${sb} ${RAISED}`}>
            <svg viewBox="0 0 8 4" className="h-1 w-2"><path d="M0 0L4 4L8 0Z" /></svg>
          </button>
        </div>
      </div>
    </div>
  );
}

function ContextMenu() {
  return (
    <div role="menu" className="absolute top-[248px] left-[170px] w-[159px] border border-[#666] bg-[linear-gradient(to_right,#f5f4f2_0,#d6d2ca_22px,#f9f8f7_23px)] pb-px shadow-[3px_3px_3px_rgba(0,0,0,0.4)]">
      {CONTEXT.map((row, i) =>
        row === null ? (
          <div key={i} className="ml-[30px] h-[2px] border-t border-[#a6a6a6]" />
        ) : (
          <button
            key={i}
            type="button"
            role="menuitem"
            disabled={row.off}
            className={`flex h-[23px] w-full items-center pl-[3px] ${row.off ? 'text-[#a6a6a6]' : ''}`}
          >
            <span className="mr-[10px] size-4">{row.icon && <Icon name={row.icon} />}</span>
            <KeyLabel text={row.text} k={row.k} dots={row.dots} />
            {row.sub && (
              <svg viewBox="0 0 5 8" className="mr-[7px] ml-auto h-2 w-[5px]"><path d="M0 0L5 4L0 8Z" /></svg>
            )}
          </button>
        ),
      )}
    </div>
  );
}

function LanguageBar() {
  const cell = 'flex w-[22px] items-center justify-center';
  const sep = 'mx-px w-[2px] border-l border-[#808080] bg-white';
  return (
    <div className="absolute top-[693px] left-[563px] flex h-[22px] border-t border-[#f0eeea] bg-[#d4d0c8]">
      <span className={sep} />
      <button type="button" className="my-[2px] mr-1 ml-[3px] w-4 bg-[#0a246a] text-white"><T>CH</T></button>
      <span className={sep} />
      <span className="w-1" />
      <button type="button" aria-label="MSPY" className={cell}><Icon name="mspy" /></button>
      <button type="button" aria-label="体验" className={cell}><Icon name="exp" /></button>
      <button type="button" className={`${cell} text-[15px] text-[#7d1010]`}>中</button>
      <button type="button" aria-label="全角" className={cell}><Icon name="moon" /></button>
      <button type="button" aria-label="标点" className={cell}><Icon name="punct" /></button>
      <button type="button" aria-label="菜单" className={cell}><Icon name="imeMenu" /></button>
      <span className={sep} />
      <span className="w-1" />
      <button type="button" aria-label="手写" className={cell}><Icon name="pen" /></button>
      <button type="button" aria-label="输入板" className={cell}><Icon name="pad" /></button>
      <span className={sep} />
      <button type="button" aria-label="帮助" className="flex w-6 items-center justify-center"><Icon name="help" /></button>
      <span className={sep} />
      <button type="button" aria-label="选项" className="flex w-4 flex-col items-center justify-center gap-1">
        <span className="h-[2px] w-[5px] bg-black" /><Caret />
      </button>
    </div>
  );
}

function Watermark() {
  return (
    <div className="absolute top-[694px] right-0 h-[44px] w-[104px]">
      <svg viewBox="0 0 104 44" className="absolute inset-0">
        <path d="M37 18C34 3 17-1 8 10C-3 24 6 40 20 40C9 36 5 25 11 14C17 4 31 5 37 18Z" fill="#1b9be0" />
        <path d="M32 9C25 2 15 5 12 13C9 21 12 27 15 29C10 20 14 7 32 9Z" fill="#5fc0f0" />
      </svg>
      <div className="relative flex flex-col items-end pt-1.5 pr-1.5">
        <span className="pr-[9px] text-[16px] leading-4 text-[#6e6e72]">运维网</span>
        <span className="mt-px font-['Liberation_Sans',sans-serif] text-[15px] leading-[18px] font-bold text-[#1c86d0]">iyunv.com</span>
      </div>
    </div>
  );
}

export default function App() {
  return (
    <div className="relative flex min-h-screen flex-col overflow-hidden bg-linear-to-r from-[#d6d2ca] to-[#f6f5f3] font-['Noto_Sans_CJK_SC',sans-serif] text-[12px] leading-4 text-black">
      <TitleBar />
      <nav className="flex h-6 shrink-0 items-center gap-4 pl-[13px]">
        {MENUS.map(([text, k]) => (
          <button key={text} type="button" className="shrink-0"><KeyLabel text={text} k={k} /></button>
        ))}
      </nav>

      <div className="mr-[10px] flex h-[25px] shrink-0 items-center rounded-r border-b border-[#a5a29c] bg-linear-to-b from-[#f6f5f3] to-[#d8d5ce]">
        <span className="mr-px ml-[6px] h-4 w-[3px] bg-[repeating-linear-gradient(to_bottom,#a09d97_0,#a09d97_2px,transparent_2px,transparent_4px)]" />
        {MAIN_LEFT.map((n, i) => <ToolItem key={i} name={n} />)}
        <Combo label="解决方案配置" value="Development" className="w-[88px]" />
        <Combo label="解决方案平台" value="Default" className="ml-[2px] w-[158px]" />
        <ToolItem name="|" />
        <ToolItem name="findFolder" />
        <Combo label="查找" value="" className="ml-[2px] flex-1" />
        {MAIN_RIGHT.map((n, i) => <ToolItem key={i} name={n} />)}
        <button type="button" aria-label="工具栏选项" className="flex h-6 w-[11px] flex-col items-center justify-end gap-0.5 rounded-r bg-linear-to-b from-[#dedbd5] to-[#8d8a84] pb-1">
          <span className="h-px w-[5px] bg-black" /><Caret />
        </button>
      </div>

      <div className="flex flex-1">
        <aside className="w-[23px] shrink-0 bg-[#d4d0c8] pt-[3px]">
          <SideTab left icon="toolbox" label="工具箱" />
        </aside>

        <div className="flex min-w-0 flex-1 flex-col">
          <main className="flex flex-1 flex-col border-r-2 border-b border-l border-[#808080] bg-[#d4d0c8]">
            <div className="flex h-5 shrink-0 items-end border-b border-[#a5a29c]">
              <svg viewBox="0 0 17 17" className="h-[17px] w-[17px] shrink-0">
                <path d="M0 17L13 2Q14.5 .5 17 .5V17Z" fill="#fff" />
                <path d="M0 17L13 2Q14.5 .5 17 .5" fill="none" stroke="#808080" />
              </svg>
              <div className="flex h-[17px] items-center rounded-tr border-t border-r border-[#808080] bg-white pb-0.5 text-[13px] font-bold">
                <T big>图书馆统计.cube [设计]</T>
              </div>
              <button type="button" aria-label="活动文件" className="mr-2 mb-2 ml-auto">
                <svg viewBox="0 0 8 4" className="h-1 w-2"><path d="M0 0H8L4 4Z" /></svg>
              </button>
              <button type="button" aria-label="关闭文档" className="mr-[7px] mb-0.5">
                <svg viewBox="0 0 12 12" className="size-3"><path d="M1.5 1.5L10.5 10.5M10.5 1.5L1.5 10.5" stroke="#000" strokeWidth="2" /></svg>
              </button>
            </div>

            <div className="mr-0.5 flex h-[26px] shrink-0 items-end border-b border-black bg-white pl-1">
              <button type="button" className="-mb-px flex h-[22px] items-center gap-1.5 rounded-t border border-b-0 border-black bg-[#d4d0c8] pr-[11px] pb-[3px] pl-[3px]">
                <Icon name="cubeLens" /><T>多维数据集结构</T>
              </button>
              {TABS.map(([icon, label], i) => (
                <button key={label} type="button" className={`flex h-5 items-center gap-[5px] pr-[9px] pb-0.5 pl-1 ${i < 7 ? 'border-r border-black' : ''}`}>
                  <Icon name={icon} /><T>{label}</T>
                </button>
              ))}
            </div>

            <div className="flex h-[29px] shrink-0 items-center pt-0.5">
              <div className="flex items-center bg-[#dcd9d2]">
                {CUBE_BAR.map((n, i) => <ToolItem key={i} name={n} />)}
              </div>
            </div>

            <div className="flex flex-1 pb-0.5">
              <div className="flex w-[240px] shrink-0 flex-col">
                <MeasuresPane />
                <DimensionsPane />
              </div>
              <section className="ml-1 flex min-w-0 flex-1 flex-col">
                <PaneHeader>数据源视图</PaneHeader>
                <div className="relative mt-[2px] mr-[2px] flex-1 border-t border-l-2 border-[#606060] bg-[#fffce8]">
                  <TableNode />
                </div>
              </section>
            </div>
          </main>

          <div className="flex h-[23px] shrink-0 items-end pl-[2px] text-[#444]">
            {[['output', '输出'], ['findSymbol', '查找符号结果'], ['errors', '错误列表'], ['findResults', '查找结果 1']].map(([icon, label]) => (
              <button key={label} type="button" className="flex h-5 items-center gap-[2px] rounded-t border-t border-r border-l border-[#8c8984] pr-[2px] pb-0.5 pl-[3px] not-first:border-l-0">
                <Icon name={icon} /><T>{label}</T>
              </button>
            ))}
          </div>
        </div>

        <aside className="flex w-[21px] shrink-0 flex-col items-end pt-[3px]">
          <SideTab icon="solSide" label="解决方案资源管理器" />
          <SideTab icon="deploy" label="部署进度" />
          <SideTab icon="classView" label="类视图" />
          <SideTab icon="propSide" label="属性" />
        </aside>
      </div>

      <footer className="flex h-[22px] shrink-0 items-center bg-[#d4d0c8] pl-2"><T>就绪</T></footer>

      <ContextMenu />
      <LanguageBar />
      <Watermark />
    </div>
  );
}
